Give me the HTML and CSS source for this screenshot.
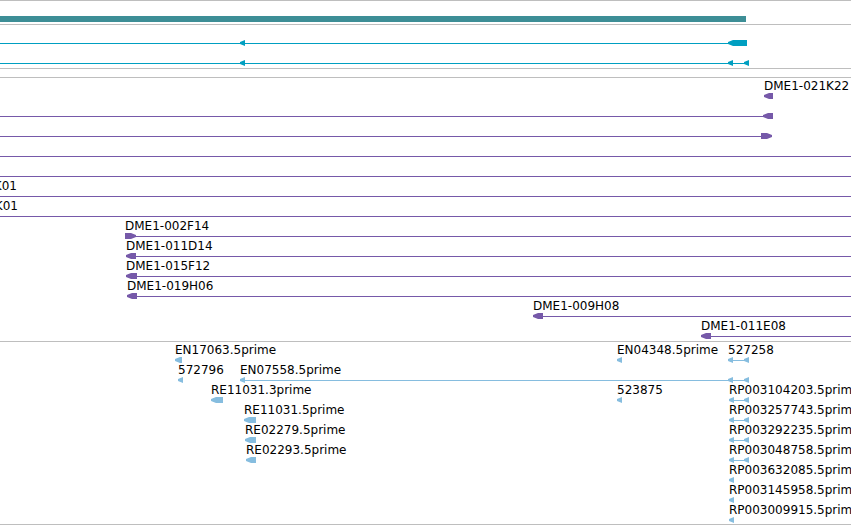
FILE: index.html
```
<!DOCTYPE html>
<html lang="en">
<head>
    <meta charset="UTF-8">
    <meta name="viewport" content="width=device-width, initial-scale=1.0">
    <title>Alignment tracks</title>
    <link rel="stylesheet" href="styles.css">
</head>
<body>
<main id="tracks"></main>
<script src="tracks.js"></script>
</body>
</html>
```
FILE: styles.css
```
body {
    margin: 0;
    background: #fff;
    overflow-x: hidden;
}
#tracks {
    border-bottom: 1px solid #bebebe;
}
.track {
    border-top: 1px solid #bebebe;
    padding: 2px 0 1px;
}
.track:last-child {
    padding-bottom: 0;
}
.spacer {
    padding: 5px 0 3px;
}
.row {
    display: block;
    width: 100%;
    height: 20px;
}
.row text {
    font-family: "DejaVu Sans", sans-serif;
    font-size: 12px;
    fill: #000;
}
.contig {
    fill: #3d8e96;
}
.gene {
    fill: #009fc1;
}
.clone {
    fill: #7659a9;
}
.est {
    fill: #86bddf;
}
```
FILE: tracks.js
```
// line: [from, to], without "to" it runs to the right edge
// exons: [from, to, direction]
const tracks = [
    {type: 'contig', rows: [
        {exons: [[0, 746, '']]}
    ]},
    {type: 'gene', rows: [
        {line: [0, 730], exons: [[240, 245, '<'], [728, 747, '<']]},
        {line: [0, 745], exons: [[240, 245, '<'], [728, 733, '<'], [744, 749, '<']]}
    ]},
    {type: 'spacer', rows: []},
    {type: 'clone', rows: [
        {labels: [[764, 'DME1-021K22']], exons: [[764, 773, '<']]},
        {line: [0, 765], exons: [[763, 773, '<']]},
        {line: [0, 765], exons: [[761, 772, '>']]},
        {line: [0]},
        {line: [0]},
        {labels: [[17, 'DME1-021K01', 'end']], line: [0]},
        {labels: [[18, 'DME1-022K01', 'end']], line: [0]},
        {labels: [[125, 'DME1-002F14']], line: [130], exons: [[125, 136, '>']]},
        {labels: [[126, 'DME1-011D14']], line: [130], exons: [[126, 136, '<']]},
        {labels: [[126, 'DME1-015F12']], line: [130], exons: [[126, 137, '<']]},
        {labels: [[127, 'DME1-019H06']], line: [130], exons: [[127, 137, '<']]},
        {labels: [[533, 'DME1-009H08']], line: [540], exons: [[533, 543, '<']]},
        {labels: [[701, 'DME1-011E08']], line: [706], exons: [[701, 711, '<']]}
    ]},
    {type: 'est', rows: [
        {labels: [[175, 'EN17063.5prime'], [617, 'EN04348.5prime'], [728, '527258']], line: [730, 745],
            exons: [[175, 182, '<'], [617, 622, '<'], [728, 733, '<'], [744, 749, '<']]},
        {labels: [[178, '572796'], [240, 'EN07558.5prime']], line: [243, 745],
            exons: [[178, 183, '<'], [240, 245, '<'], [728, 733, '<'], [744, 749, '<']]},
        {labels: [[211, 'RE11031.3prime'], [617, '523875'], [729, 'RP003104203.5prime']], line: [731, 745],
            exons: [[211, 223, '<'], [617, 622, '<'], [729, 734, '<'], [744, 749, '<']]},
        {labels: [[244, 'RE11031.5prime'], [729, 'RP003257743.5prime']], line: [731, 745],
            exons: [[244, 256, '<'], [729, 734, '<'], [744, 749, '<']]},
        {labels: [[245, 'RE02279.5prime'], [729, 'RP003292235.5prime']], line: [731, 745],
            exons: [[245, 256, '<'], [729, 734, '<'], [744, 749, '<']]},
        {labels: [[246, 'RE02293.5prime'], [729, 'RP003048758.5prime']], line: [731, 745],
            exons: [[246, 256, '<'], [729, 734, '<'], [744, 749, '<']]},
        {labels: [[729, 'RP003632085.5prime']], exons: [[729, 734, '<']]},
        {labels: [[729, 'RP003145958.5prime']], exons: [[729, 734, '<']]},
        {labels: [[729, 'RP003009915.5prime']], exons: [[729, 734, '<']]}
    ]}
];

// the arrow head is 5px long with a blunt tip
function exonPath([from, to, dir]) {
    if (dir === '<') {
        return `M${from} 15V17L${from + 5} 19H${to}V13H${from + 5}Z`;
    }
    if (dir === '>') {
        return `M${to} 15V17L${to - 5} 19H${from}V13H${to - 5}Z`;
    }
    return `M${from} 13H${to}V19H${from}Z`;
}

function drawRow(row, type) {
    let tag = `<svg class="row ${type}">`;
    if (row.line) {
        let [from, to] = row.line;
        let width = to ? to - from : '100%';
        tag += `<rect x="${from}" y="16" width="${width}" height="1"/>`;
    }
    for (let exon of row.exons || []) {
        tag += `<path d="${exonPath(exon)}"/>`;
    }
    for (let [x, text, anchor] of row.labels || []) {
        tag += `<text x="${x}" y="10" text-anchor="${anchor || 'start'}">${text}</text>`;
    }
    return tag + '</svg>';
}

let html = '';
for (let track of tracks) {
    let rows = track.rows.map(row => drawRow(row, track.type)).join('');
    html += `<section class="track ${track.rows.length ? '' : 'spacer'}">${rows}</section>`;
}
document.getElementById('tracks').innerHTML = html;
```
